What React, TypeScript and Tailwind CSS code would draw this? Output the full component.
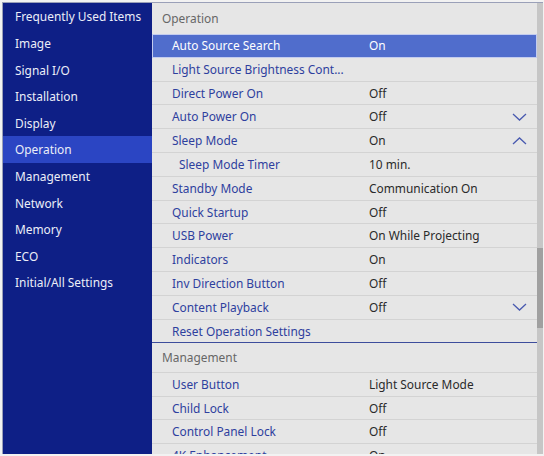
import React from "react";

const side = [
  "Frequently Used Items",
  "Image",
  "Signal I/O",
  "Installation",
  "Display",
  "Operation",
  "Management",
  "Network",
  "Memory",
  "ECO",
  "Initial/All Settings",
];

type Row = { label: string; value?: string; chev?: "down" | "up"; indent?: boolean; sel?: boolean };

const opRows: Row[] = [
  { label: "Auto Source Search", value: "On", sel: true },
  { label: "Light Source Brightness Cont..." },
  { label: "Direct Power On", value: "Off" },
  { label: "Auto Power On", value: "Off", chev: "down" },
  { label: "Sleep Mode", value: "On", chev: "up" },
  { label: "Sleep Mode Timer", value: "10 min.", indent: true },
  { label: "Standby Mode", value: "Communication On" },
  { label: "Quick Startup", value: "Off" },
  { label: "USB Power", value: "On While Projecting" },
  { label: "Indicators", value: "On" },
  { label: "Inv Direction Button", value: "Off" },
  { label: "Content Playback", value: "Off", chev: "down" },
];

const mgRows: Row[] = [
  { label: "User Button", value: "Light Source Mode" },
  { label: "Child Lock", value: "Off" },
  { label: "Control Panel Lock", value: "Off" },
  { label: "4K Enhancement", value: "On" },
];

function Chev({ dir }: { dir: "down" | "up" }) {
  return (
    <svg width="15" height="9" viewBox="0 0 15 9" className="absolute left-[360px] top-1/2 -translate-y-1/2">
      {dir === "down" ? (
        <polyline points="1,1.5 7.5,7.5 14,1.5" fill="none" stroke="#4a5bb0" strokeWidth="1.3" />
      ) : (
        <polyline points="1,7.5 7.5,1.5 14,7.5" fill="none" stroke="#4a5bb0" strokeWidth="1.3" />
      )}
    </svg>
  );
}

function RowEl({ r }: { r: Row }) {
  if (r.sel) {
    return (
      <div className="relative flex items-center h-[23.8px] shrink-0 bg-[#506dcc] border border-[#c3ccef] text-white pt-[1px]">
        <span className="absolute left-[19px]">{r.label}</span>
        <span className="absolute left-[216px]">{r.value}</span>
      </div>
    );
  }
  return (
    <div className="relative flex items-center h-[23.8px] shrink-0 border-b border-[#d3d3d3] pt-[1px]">
      <span className={`absolute text-[#2e3f9e] ${r.indent ? "left-[27px]" : "left-[20px]"}`}>{r.label}</span>
      {r.value && <span className="absolute left-[217px] text-[#2a2a2a]">{r.value}</span>}
      {r.chev && <Chev dir={r.chev} />}
    </div>
  );
}

export default function App() {
  return (
    <div
      className="w-[544px] h-[456px] bg-[#f2f2f2] pt-[2px] pl-[2px] overflow-hidden"
      style={{ fontFamily: '"Noto Sans", "Open Sans", sans-serif' }}
    >
      <div className="w-[541px] h-[452px] flex border-t border-l border-[#9aa0b8] overflow-hidden text-[11.9px]">
        <div className="w-[149px] shrink-0 bg-[#0e1f86] text-[#eceef8] flex flex-col">
          {side.map((s) => (
            <div
              key={s}
              className={`h-[26.6px] shrink-0 flex items-center pl-[12px] pt-[2px] ${s === "Operation" ? "bg-[#2b45c3]" : ""}`}
            >
              {s}
            </div>
          ))}
        </div>
        <div className="flex-1 bg-[#e6e6e6] flex flex-col overflow-hidden">
          <div className="h-[31px] shrink-0 flex items-center pl-[10px] pt-[1px] text-[#666666]">Operation</div>
          {opRows.map((r) => (
            <RowEl key={r.label} r={r} />
          ))}
          <div className="relative flex items-center h-[23.8px] shrink-0 border-b border-[#3d4d9c] pt-[1px]">
            <span className="absolute left-[20px] text-[#2e3f9e]">Reset Operation Settings</span>
          </div>
          <div className="h-[29.5px] shrink-0 flex items-center pl-[10px] pt-[1px] text-[#666666] border-b border-[#d3d3d3]">
            Management
          </div>
          {mgRows.map((r) => (
            <RowEl key={r.label} r={r} />
          ))}
        </div>
        <div className="w-[6px] shrink-0 bg-[#c6c6c6] flex flex-col">
          <div className="h-[245px] shrink-0" />
          <div className="h-[80px] shrink-0 bg-[#a0a0a0]" />
        </div>
      </div>
    </div>
  );
}
